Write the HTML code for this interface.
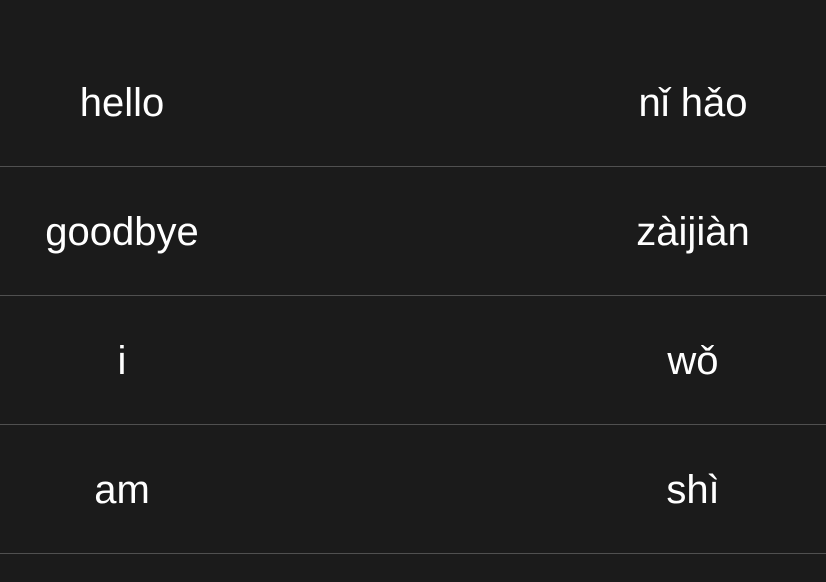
<!DOCTYPE html>
<html><head><meta charset="utf-8"><style>
body{margin:0;background:#1b1b1b;width:826px;height:582px;overflow:hidden;font-family:"Liberation Sans",Arial,sans-serif;color:#fff}
.row{position:absolute;left:0;width:826px;height:129px;border-bottom:1px solid #505050;box-sizing:border-box}
.c{position:absolute;top:0;height:128px;line-height:130px;font-size:40px;text-align:center;width:300px}
.l{left:-28px}.r{left:543px}
</style></head><body>
<div class="row" style="top:38px"><div class="c l">hello</div><div class="c r">nǐ hǎo</div></div>
<div class="row" style="top:167px"><div class="c l">goodbye</div><div class="c r">zàijiàn</div></div>
<div class="row" style="top:296px"><div class="c l">i</div><div class="c r">wǒ</div></div>
<div class="row" style="top:425px"><div class="c l">am</div><div class="c r">shì</div></div>
</body></html>
